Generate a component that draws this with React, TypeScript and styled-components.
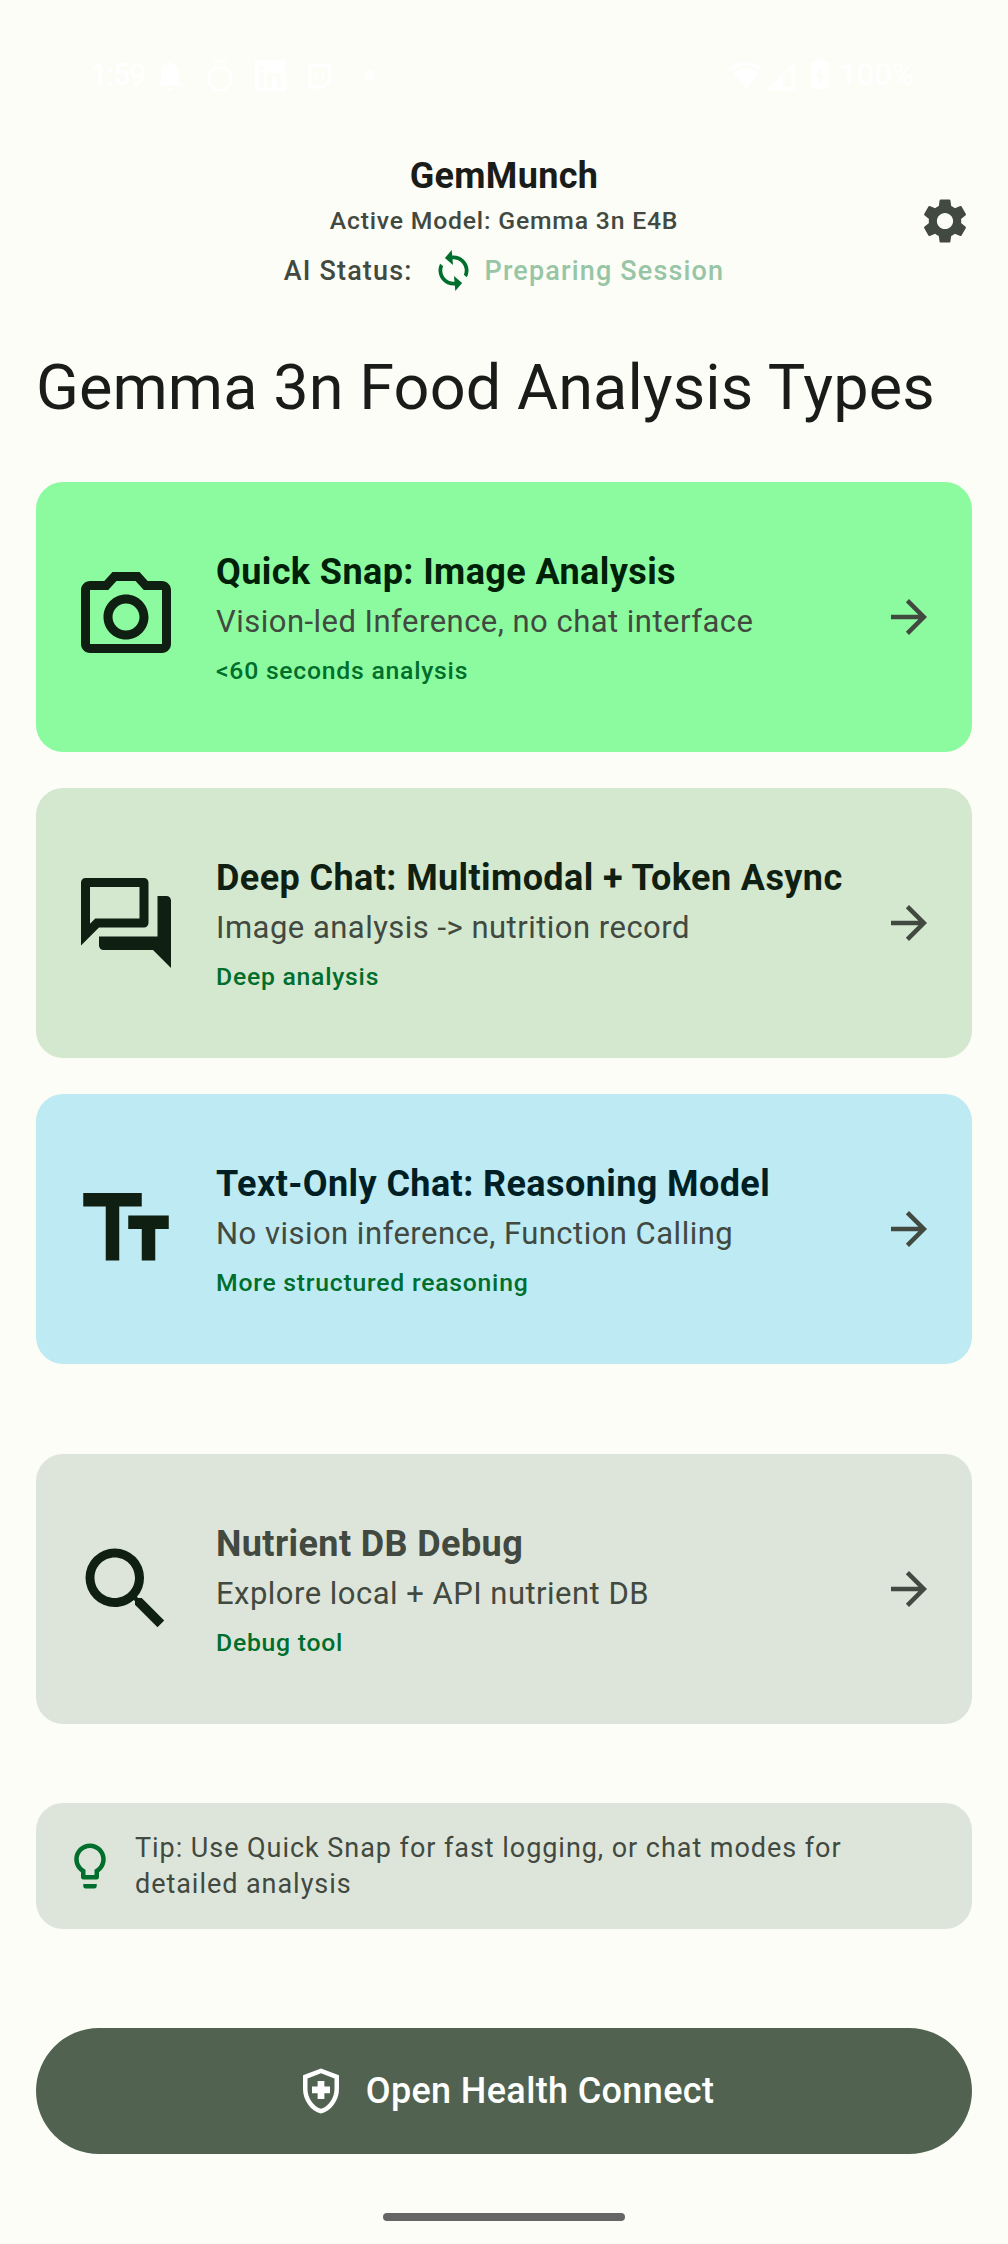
import React from "react";
import styled, { createGlobalStyle } from "styled-components";

const color = {
  background: "#fcfdf7",
  onSurface: "#1a1c19",
  onSurfaceVariant: "#424940",
  surfaceVariant: "#dde5da",
  primary: "#006e2c",
  primaryContainer: "#8cfb9f",
  onPrimaryContainer: "#002108",
  secondary: "#516350",
  secondaryContainer: "#d4e8d0",
  onSecondaryContainer: "#0f1f11",
  tertiaryContainer: "#bdeaf3",
  onTertiaryContainer: "#001f25",
};

const GlobalStyle = createGlobalStyle`
  *, *::before, *::after { box-sizing: border-box; }
  body {
    margin: 0;
    background: ${color.background};
    font-family: Roboto, "Noto Sans", sans-serif;
    color: ${color.onSurface};
  }
  h1, h2, p { margin: 0; font-weight: 400; }
  button { border: 0; padding: 0; font: inherit; background: none; }
`;

const Screen = styled.div`
  width: 1008px;
  height: 2244px;
  display: flex;
  flex-direction: column;
  background: ${color.background};
`;

const StatusBar = styled.div`
  height: 149px;
  padding: 56px 90px 0;
  display: flex;
  align-items: flex-start;
  justify-content: space-between;
  color: #fff;
`;

const StatusGroup = styled.div`
  height: 38px;
  display: flex;
  align-items: center;
`;

const StatusText = styled.span<{ $width: number; $tracking?: number }>`
  width: ${(p) => p.$width}px;
  font-size: 31px;
  line-height: 38px;
  font-weight: 500;
  letter-spacing: ${(p) => p.$tracking ?? 0}px;
  white-space: nowrap;
`;

const StatusIcons = styled.svg`
  display: block;
`;

const AppBar = styled.header`
  height: 144px;
  padding: 0 36px;
  display: grid;
  grid-template-columns: 54px 1fr 54px;
  align-items: center;
`;

const AppBarCenter = styled.div`
  grid-column: 2;
  display: flex;
  flex-direction: column;
  align-items: center;
`;

const AppTitle = styled.h1`
  font-size: 36px;
  line-height: 54px;
  font-weight: 700;
  letter-spacing: 0.34px;
`;

const ModelLine = styled.p`
  font-size: 24.75px;
  line-height: 36px;
  font-weight: 500;
  letter-spacing: 0.8px;
  color: ${color.onSurfaceVariant};
`;

const SessionRow = styled.div`
  margin-top: 9px;
  height: 45px;
  display: flex;
  align-items: center;
  gap: 9px;
`;

const SessionText = styled.span<{ $pending?: boolean }>`
  margin-right: ${(p) => (p.$pending ? 0 : 9)}px;
  font-size: 27px;
  line-height: 36px;
  font-weight: 500;
  letter-spacing: 1.16px;
  color: ${(p) => (p.$pending ? "#97c5a6" : color.onSurfaceVariant)};
`;

const SettingsButton = styled.button`
  width: 54px;
  height: 54px;
`;

const Content = styled.main`
  padding: 54px 36px 0;
  display: flex;
  flex-direction: column;
`;

const Headline = styled.h2`
  margin-bottom: 54px;
  font-size: 63px;
  line-height: 81px;
  letter-spacing: 0.09px;
  white-space: nowrap;
`;

const CardList = styled.div`
  display: flex;
  flex-direction: column;
  gap: 36px;
  margin-bottom: 90px;
`;

const Card = styled.div<{ $bg: string }>`
  height: 270px;
  padding: 0 36px;
  border-radius: 27px;
  background: ${(p) => p.$bg};
  display: flex;
  align-items: center;
`;

const CardText = styled.div`
  flex: 1;
  min-width: 0;
  padding-left: 36px;
  white-space: nowrap;
`;

const CardTitle = styled.h2<{ $color: string }>`
  font-size: 36px;
  line-height: 54px;
  font-weight: 700;
  letter-spacing: 0.4px;
  color: ${(p) => p.$color};
`;

const CardDescription = styled.p`
  font-size: 31px;
  line-height: 45px;
  letter-spacing: 0.48px;
  color: ${color.onSurfaceVariant};
`;

const CardNote = styled.p`
  margin-top: 9px;
  font-size: 24.75px;
  line-height: 36px;
  font-weight: 500;
  letter-spacing: 0.75px;
  color: ${color.primary};
`;

const Tip = styled.div`
  margin-top: 79px;
  padding: 27px;
  border-radius: 27px;
  background: ${color.surfaceVariant};
  display: flex;
  align-items: center;
  gap: 18px;
`;

const TipText = styled.p`
  flex: 1;
  font-size: 27px;
  line-height: 36px;
  letter-spacing: 0.95px;
  color: ${color.onSurfaceVariant};
`;

const ConnectButton = styled.button`
  margin-top: 99px;
  height: 126px;
  border-radius: 63px;
  background: ${color.secondary};
  color: #fff;
  display: flex;
  align-items: center;
  justify-content: center;
  gap: 18px;
  font-size: 36px;
  line-height: 54px;
  font-weight: 500;
  letter-spacing: 0.36px;
`;

const HomeIndicator = styled.div`
  width: 242px;
  height: 8px;
  margin: 59px 0 0 383px;
  border-radius: 4px;
  background: #666;
`;

const IconSvg = styled.svg`
  display: block;
  flex: none;
`;

const paths = {
  camera:
    "M20 4h-3.17L15 2H9L7.17 4H4c-1.1 0-2 .9-2 2v12c0 1.1.9 2 2 2h16c1.1 0 2-.9 2-2V6c0-1.1-.9-2-2-2zm0 14H4V6h4.05l1.83-2h4.24l1.83 2H20v12zM12 7c-2.76 0-5 2.24-5 5s2.24 5 5 5 5-2.24 5-5-2.24-5-5-5zm0 8c-1.65 0-3-1.35-3-3s1.35-3 3-3 3 1.35 3 3-1.35 3-3 3z",
  chat:
    "M15 4v7H5.17L4 12.17V4h11m1-2H3c-.55 0-1 .45-1 1v14l4-4h10c.55 0 1-.45 1-1V3c0-.55-.45-1-1-1zm5 4h-2v9H6v2c0 .55.45 1 1 1h11l4 4V7c0-.55-.45-1-1-1z",
  textFields: "M2.5 4v3h5v12h3V7h5V4h-13zm19 5h-9v3h3v7h3v-7h3V9z",
  search:
    "M15.5 14h-.79l-.28-.27A6.471 6.471 0 0 0 16 9.5 6.5 6.5 0 1 0 9.5 16c1.61 0 3.09-.59 4.23-1.57l.27.28v.79l5 4.99L20.49 19l-4.99-5zm-6 0C7.01 14 5 11.99 5 9.5S7.01 5 9.5 5 14 7.01 14 9.5 11.99 14 9.5 14z",
  arrow: "M12 4l-1.41 1.41L16.17 11H4v2h12.17l-5.58 5.59L12 20l8-8z",
  bulb:
    "M9 21c0 .55.45 1 1 1h4c.55 0 1-.45 1-1v-1H9v1zm3-19C8.14 2 5 5.14 5 9c0 2.38 1.19 4.47 3 5.74V17c0 .55.45 1 1 1h6c.55 0 1-.45 1-1v-2.26c1.81-1.27 3-3.36 3-5.74 0-3.86-3.14-7-7-7zm2.85 11.1l-.85.6V16h-4v-2.3l-.85-.6A4.997 4.997 0 0 1 7 9c0-2.76 2.24-5 5-5s5 2.24 5 5c0 1.63-.8 3.16-2.15 4.1z",
  health:
    "M10.5 13H8v-3h2.5V7.5h3V10H16v3h-2.5v2.5h-3V13zM12 2L4 5v6.09c0 5.05 3.41 9.76 8 10.91 4.59-1.15 8-5.86 8-10.91V5l-8-3zm6 9.09c0 4-2.55 7.7-6 8.83-3.45-1.13-6-4.82-6-8.83v-4.7l6-2.25 6 2.25v4.7z",
  settings:
    "M19.14 12.94c.04-.3.06-.61.06-.94 0-.32-.02-.64-.07-.94l2.03-1.58c.18-.14.23-.41.12-.61l-1.92-3.32c-.12-.22-.37-.29-.59-.22l-2.39.96c-.5-.38-1.03-.7-1.62-.94l-.36-2.54c-.04-.24-.24-.41-.48-.41h-3.84c-.24 0-.43.17-.47.41l-.36 2.54c-.59.24-1.13.57-1.62.94l-2.39-.96c-.22-.08-.47 0-.59.22L2.74 8.87c-.12.21-.08.47.12.61l2.03 1.58c-.05.3-.09.63-.09.94s.02.64.07.94l-2.03 1.58c-.18.14-.23.41-.12.61l1.92 3.32c.12.22.37.29.59.22l2.39-.96c.5.38 1.03.7 1.62.94l.36 2.54c.05.24.24.41.48.41h3.84c.24 0 .44-.17.47-.41l.36-2.54c.59-.24 1.13-.56 1.62-.94l2.39.96c.22.08.47 0 .59-.22l1.92-3.32c.12-.22.07-.47-.12-.61l-2.01-1.58zM12 15.6c-1.98 0-3.6-1.62-3.6-3.6s1.62-3.6 3.6-3.6 3.6 1.62 3.6 3.6-1.62 3.6-3.6 3.6z",
  sync:
    "M12 4V1L8 5l4 4V6c3.31 0 6 2.69 6 6 0 1.01-.25 1.97-.7 2.8l1.46 1.46C19.54 15.03 20 13.57 20 12c0-4.42-3.58-8-8-8zm0 14c-3.31 0-6-2.69-6-6 0-1.01.25-1.97.7-2.8L5.24 7.74C4.46 8.97 4 10.43 4 12c0 4.42 3.58 8 8 8v3l4-4-4-4v3z",
};

type IconProps = {
  name: keyof typeof paths;
  size?: number;
  fill?: string;
  angle?: number;
};

function Icon({ name, size = 54, fill = "currentColor", angle = 0 }: IconProps) {
  return (
    <IconSvg width={size} height={size} viewBox="0 0 24 24" fill={fill} aria-hidden="true">
      <path d={paths[name]} transform={`rotate(${angle} 12 12)`} />
    </IconSvg>
  );
}

type Option = {
  icon: keyof typeof paths;
  title: string;
  description: string;
  note: string;
  bg: string;
  titleColor: string;
};

const analysisOptions: Option[] = [
  {
    icon: "camera",
    title: "Quick Snap: Image Analysis",
    description: "Vision-led Inference, no chat interface",
    note: "<60 seconds analysis",
    bg: color.primaryContainer,
    titleColor: color.onPrimaryContainer,
  },
  {
    icon: "chat",
    title: "Deep Chat: Multimodal + Token Async",
    description: "Image analysis -> nutrition record",
    note: "Deep analysis",
    bg: color.secondaryContainer,
    titleColor: color.onSecondaryContainer,
  },
  {
    icon: "textFields",
    title: "Text-Only Chat: Reasoning Model",
    description: "No vision inference, Function Calling",
    note: "More structured reasoning",
    bg: color.tertiaryContainer,
    titleColor: color.onTertiaryContainer,
  },
];

const debugOption: Option = {
  icon: "search",
  title: "Nutrient DB Debug",
  description: "Explore local + API nutrient DB",
  note: "Debug tool",
  bg: color.surfaceVariant,
  titleColor: color.onSurfaceVariant,
};

function OptionCard({ option }: { option: Option }) {
  return (
    <Card $bg={option.bg}>
      <Icon name={option.icon} size={108} fill={color.onSecondaryContainer} />
      <CardText>
        <CardTitle $color={option.titleColor}>{option.title}</CardTitle>
        <CardDescription>{option.description}</CardDescription>
        <CardNote>{option.note}</CardNote>
      </CardText>
      <Icon name="arrow" fill={color.onSurfaceVariant} />
    </Card>
  );
}

function NotificationIcons() {
  return (
    <StatusIcons width="220" height="38" viewBox="156 56 220 38" fill="#fff" aria-hidden="true">
      <path d="M170 62c1.400 0 2.300 1 2.300 2.300 4 1 6.700 4.300 6.700 8.700v8l3 4v1h-24v-1l3-4v-8c0-4.400 2.700-7.700 6.700-8.700C167.700 63 168.600 62 170 62zM167 88h6c0 1.500-1.300 2.500-3 2.500s-3-1-3-2.500z" />
      <circle cx="220" cy="79" r="11.500" fill="none" stroke="#fff" strokeWidth="2.600" />
      <path d="M213.500 60h13v2.800h-13z" />
      <path d="M255 60h31v31h-31z" />
      <g fill={color.background}>
        <circle cx="261.500" cy="68" r="2.600" />
        <path d="M259.300 73h4.500v14h-4.500zM267 73h4.300v1.900c1-1.500 2.500-2.200 4.500-2.200 4 0 5.700 2.500 5.700 6.600V87h-4.500v-7c0-2.200-.8-3.400-2.600-3.400-2 0-2.900 1.400-2.900 3.600V87H267z" />
      </g>
      <path d="M310 65.500h19.500v15.500l-6 6H310z" fill="none" stroke="#fff" strokeWidth="3" />
      <text x="319.500" y="79.500" textAnchor="middle" fontFamily="Roboto" fontSize="11.500" fontWeight="700">31</text>
      <circle cx="370" cy="75" r="5" />
    </StatusIcons>
  );
}

function SystemIcons() {
  return (
    <StatusIcons width="111" height="38" viewBox="728 56 111 38" fill="#fff" aria-hidden="true">
      <path d="M730.500 69.500c9-8 22-8 31 0" fill="none" stroke="#fff" strokeWidth="3" />
      <path d="M733.500 73c7-6 19-6 26 0L746.500 89z" />
      <path d="M767 90l27.500-28v28zM783 75.500V87h8.500V67.500z" fillRule="evenodd" />
      <path d="M816 59h7v3h5.500v27h-17V62h4.500zM821.500 66l-6 11h3.500v8l5.500-10.500H821z" fillRule="evenodd" />
    </StatusIcons>
  );
}

export default function App() {
  return (
    <>
      <GlobalStyle />
      <Screen>
        <StatusBar>
          <StatusGroup>
            <StatusText $width={66} $tracking={-1.5}>1:59</StatusText>
            <NotificationIcons />
          </StatusGroup>
          <StatusGroup>
            <SystemIcons />
            <StatusText $width={79}>100%</StatusText>
          </StatusGroup>
        </StatusBar>

        <AppBar>
          <AppBarCenter>
            <AppTitle>GemMunch</AppTitle>
            <ModelLine>Active Model: Gemma 3n E4B</ModelLine>
            <SessionRow>
              <SessionText>AI Status:</SessionText>
              <Icon name="sync" size={45} fill={color.primary} angle={-5} />
              <SessionText $pending>Preparing Session</SessionText>
            </SessionRow>
          </AppBarCenter>
          <SettingsButton aria-label="Settings">
            <Icon name="settings" fill={color.onSurfaceVariant} />
          </SettingsButton>
        </AppBar>

        <Content>
          <Headline>Gemma 3n Food Analysis Types</Headline>
          <CardList>
            {analysisOptions.map((option) => (
              <OptionCard key={option.title} option={option} />
            ))}
          </CardList>
          <OptionCard option={debugOption} />
          <Tip>
            <Icon name="bulb" fill={color.primary} />
            <TipText>Tip: Use Quick Snap for fast logging, or chat modes for detailed analysis</TipText>
          </Tip>
          <ConnectButton>
            <Icon name="health" />
            Open Health Connect
          </ConnectButton>
        </Content>
        <HomeIndicator />
      </Screen>
    </>
  );
}
